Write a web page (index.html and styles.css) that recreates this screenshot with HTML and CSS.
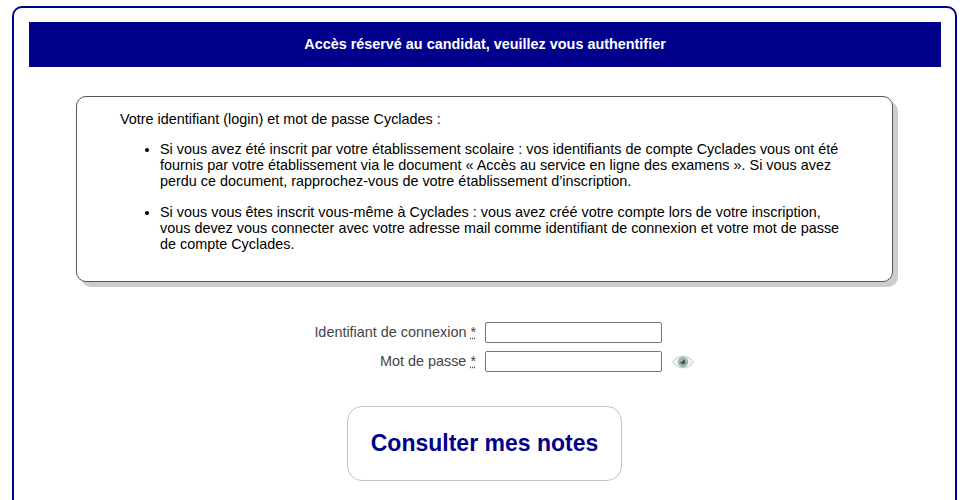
FILE: index.html
```html
<!DOCTYPE html>
<html lang="fr">
<head>
<meta charset="utf-8">
<title>Accès candidat</title>
<link rel="stylesheet" href="styles.css">
</head>
<body>
<main class="page">
  <h1 class="banner">Accès réservé au candidat, veuillez vous authentifier</h1>
  <section class="info">
    <p class="intro">Votre identifiant (login) et mot de passe Cyclades :</p>
    <ul class="list">
      <li>Si vous avez été inscrit par votre établissement scolaire : vos identifiants de compte Cyclades vous ont été fournis par votre établissement via le document « Accès au service en ligne des examens ». Si vous avez perdu ce document, rapprochez-vous de votre établissement d’inscription.</li>
      <li>Si vous vous êtes inscrit vous-même à Cyclades : vous avez créé votre compte lors de votre inscription, vous devez vous connecter avec votre adresse mail comme identifiant de connexion et votre mot de passe de compte Cyclades.</li>
    </ul>
  </section>
  <form class="form">
    <div class="row">
      <label class="label" for="login">Identifiant de connexion <abbr class="req" title="obligatoire">*</abbr></label>
      <input class="field" id="login" type="text">
    </div>
    <div class="row">
      <label class="label" for="pass">Mot de passe <abbr class="req" title="obligatoire">*</abbr></label>
      <input class="field" id="pass" type="password">
      <svg class="eye" width="22" height="14" viewBox="0 0 22 14" aria-hidden="true">
        <path d="M0.500 7C4 2.500 7.500 1.200 11 1.200s7 1.300 10.500 5.800C18 11.500 14.500 12.800 11 12.800S4 11.500 0.500 7z" fill="#f1f3f2" stroke="#c0c5c3" stroke-width="1"/>
        <circle cx="11" cy="7" r="5.200" fill="#9db5af"/>
        <circle cx="11" cy="7.200" r="2.400" fill="#4c5653"/>
        <circle cx="9.800" cy="5.800" r="0.800" fill="#e8eeec"/>
      </svg>
    </div>
    <button class="submit" type="button">Consulter mes notes</button>
  </form>
</main>
</body>
</html>
```
FILE: styles.css
```css
html, body {
  margin: 0;
  height: 500px;
  overflow: hidden;
  background: #fff;
}
body {
  padding: 6px 17px 0 12px;
  box-sizing: border-box;
  font-family: "Liberation Sans", Arial, sans-serif;
  font-size: 14.400px;
  color: #000;
}
.page {
  border: 2px solid #00008b;
  border-bottom: 0;
  border-radius: 10px 10px 0 0;
  padding: 14px 14px 0 15px;
  height: 494px;
  box-sizing: border-box;
}
.banner {
  margin: 0;
  height: 45px;
  line-height: 45px;
  background: #00008b;
  color: #fff;
  font-size: 14.400px;
  font-weight: bold;
  text-align: center;
}
.info {
  margin: 29px 48px 0 47px;
  height: 186px;
  box-sizing: border-box;
  border: 1px solid #555;
  border-radius: 10px;
  box-shadow: 5px 5px 0 #ccc;
  padding: 14px 40px 0 43px;
  line-height: 16px;
}
.intro { margin: 0; }
.list {
  margin: 14px 0 0;
  padding: 0 0 0 40px;
}
.list li { margin-bottom: 15px; }
.form {
  margin-top: 40px;
  display: flex;
  flex-direction: column;
}
.row {
  display: flex;
  align-items: center;
  height: 21px;
  margin-bottom: 8px;
}
.label {
  width: 456px;
  box-sizing: border-box;
  padding-right: 9px;
  padding-bottom: 2px;
  text-align: right;
  color: #444;
}
.req {
  text-decoration: underline dotted;
}
.field {
  width: 177px;
  height: 21px;
  box-sizing: border-box;
  margin: 0;
  padding: 1px 2px;
  border: 1px solid #767676;
  border-radius: 2px;
  background: #fff;
}
.eye { margin-left: 10px; }
.submit {
  align-self: flex-start;
  margin: 26px 0 0 318px;
  width: 275px;
  height: 75px;
  background: #fff;
  border: 1px solid #c4c4c4;
  border-radius: 15px;
  color: #00008b;
  font-family: "Liberation Sans", Arial, sans-serif;
  font-size: 23px;
  font-weight: bold;
  padding: 0;
}
```
